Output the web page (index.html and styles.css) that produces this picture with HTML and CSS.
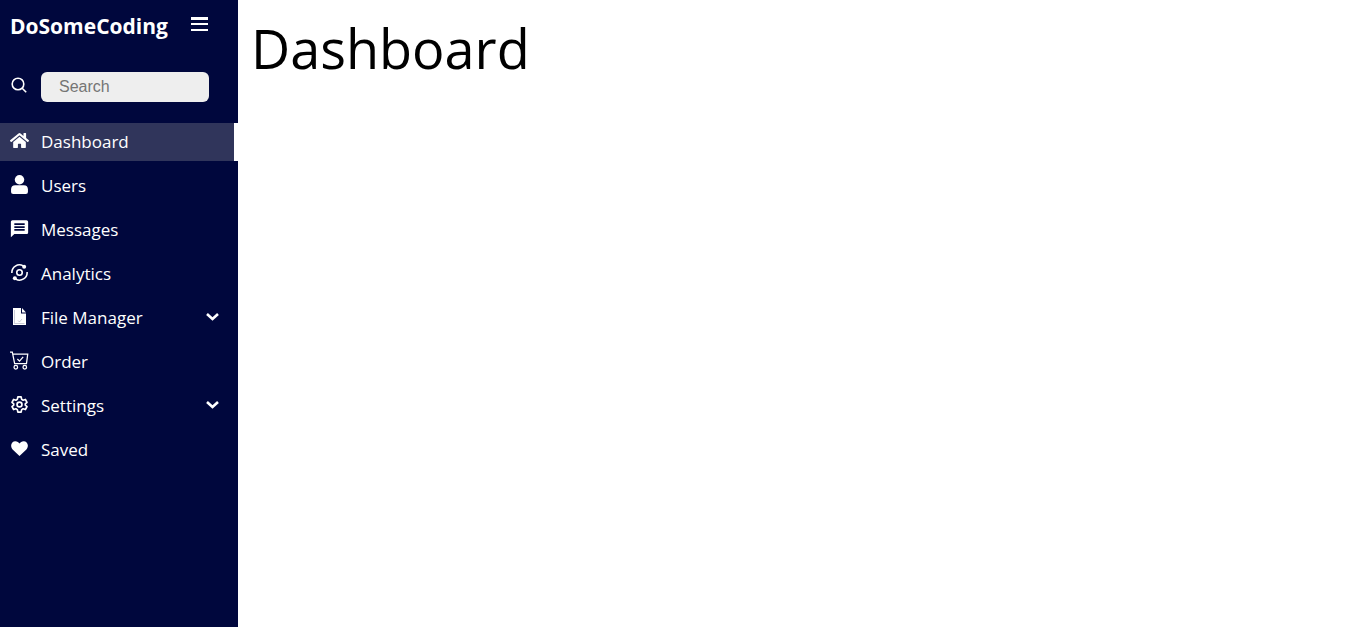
FILE: index.html
```html
<!DOCTYPE html>
<html lang="en">
<head>
<meta charset="utf-8">
<meta name="viewport" content="width=device-width, initial-scale=1">
<title>Dashboard</title>
<link rel="stylesheet" href="styles.css">
</head>
<body>
<div class="layout">
  <aside class="sidebar">
    <div class="top">
      <h2 class="brand">DoSomeCoding</h2>
      <button class="toggle" type="button" aria-label="Toggle menu">
        <svg class="icon" viewBox="0 0 19 19"><path fill="currentColor" d="M1 2h17v3H1zM1 8h17v2H1zM1 14h17v2H1z"/></svg>
      </button>
    </div>
    <div class="search">
      <label class="search-label" for="search" aria-label="Search">
        <svg class="icon" viewBox="0 0 19 19" fill="none" stroke="currentColor" stroke-width="1.6"><circle cx="8" cy="8" r="5.8"/><path d="M12.2 12.2l4 4"/></svg>
      </label>
      <input class="search-input" id="search" type="text" placeholder="Search">
    </div>
    <nav class="menu">
      <a class="link active" href="#">
        <svg class="icon" viewBox="0 0 576 512"><path fill="currentColor" d="M280.4 148.3L96 300.1V464a16 16 0 0 0 16 16l112-.3a16 16 0 0 0 16-16V368a16 16 0 0 1 16-16h64a16 16 0 0 1 16 16v95.600a16 16 0 0 0 16 16L464 480a16 16 0 0 0 16-16V300L295.700 148.300a12.200 12.200 0 0 0-15.300 0zM571.600 251.500L488 182.600V44a12 12 0 0 0-12-12h-56a12 12 0 0 0-12 12v72.600L318.500 43a48 48 0 0 0-61 0L4.300 251.500a12 12 0 0 0-1.600 16.900l25.500 31a12 12 0 0 0 16.900 1.600l235.200-193.700a12.200 12.200 0 0 1 15.300 0L530.900 301a12 12 0 0 0 16.900-1.600l25.500-31a12 12 0 0 0-1.700-16.900z"/></svg>
        <span class="text">Dashboard</span>
      </a>
      <a class="link" href="#">
        <svg class="icon" viewBox="0 0 18 18"><g fill="currentColor"><circle cx="9" cy="4.500" r="4.500"/><path d="M5 9.800h8q4 0 4 4V16q0 2-2 2H3q-2 0-2-2v-2.200q0-4 4-4z"/></g></svg>
        <span class="text">Users</span>
      </a>
      <a class="link" href="#">
        <svg class="icon" viewBox="1 1 22 22"><path fill="currentColor" fill-rule="evenodd" d="M20 2.500H4c-1.100 0-2 .9-2 2V22l4-3.500h14c1.100 0 2-.9 2-2v-12c0-1.100-.9-2-2-2zM6 6h12v2H6zm0 3.300h12v2H6zm0 3.300h12v2H6z"/></svg>
        <span class="text">Messages</span>
      </a>
      <a class="link" href="#">
        <svg class="icon" viewBox="0 0 18 18" fill="none" stroke="currentColor" stroke-width="1.500"><circle cx="9" cy="9" r="2.600"/><path d="M1.800 9.500A7.200 7.200 0 0 1 12.500 2.700M16.200 8.500A7.200 7.200 0 0 1 5.500 15.300"/><g fill="currentColor" stroke="none"><circle cx="13.400" cy="3.500" r="1.900"/><circle cx="4.600" cy="14.500" r="1.900"/></g></svg>
        <span class="text">Analytics</span>
      </a>
      <a class="link" href="#">
        <svg class="icon" viewBox="0 0 19 19"><path fill="currentColor" d="M3 1h8v5.500h5V18H3z"/><path fill="currentColor" d="M12 1l4 4.500h-4z"/><path fill="none" stroke="#00073d" stroke-opacity=".25" stroke-width=".8" d="M4.500 16.500h10M4.500 3v13.500M8 13.500l1.500 1.500 2.500-3"/></svg>
        <span class="text">File Manager</span>
        <svg class="icon chevron" viewBox="0 0 19 19" fill="none" stroke="currentColor" stroke-width="2.600"><path d="M4 7l5.500 5L15 7"/></svg>
      </a>
      <a class="link" href="#">
        <svg class="icon" viewBox="0 0 18 18" fill="none" stroke="currentColor" stroke-width="1.200"><path d="M0 1h2.200L4.400 12h11.200L16.800 3H3M7 7.600l2 2 3.500-4"/><circle cx="5.500" cy="15.400" r="1.700"/><circle cx="14" cy="15.400" r="1.700"/></svg>
        <span class="text">Order</span>
      </a>
      <a class="link" href="#">
        <svg class="icon" viewBox="-1 -1 20 20" fill="none" stroke="currentColor" stroke-width="1.800" stroke-linejoin="round"><path d="M7.300 1h3.400l.6 2.600 1.500.9 2.400-.8 1.700 3L15.100 8.300v1.400l1.800 1.600-1.700 3-2.400-.8-1.500.9-.6 2.600H7.300l-.6-2.600-1.500-.9-2.400.8-1.700-3 1.800-1.600V8.300L1.100 6.700l1.700-3 2.400.8 1.500-.9z"/><circle cx="9" cy="9" r="2.600"/></svg>
        <span class="text">Settings</span>
        <svg class="icon chevron" viewBox="0 0 19 19" fill="none" stroke="currentColor" stroke-width="2.600"><path d="M4 7l5.500 5L15 7"/></svg>
      </a>
      <a class="link" href="#">
        <svg class="icon" viewBox="0 0 19 19"><path fill="currentColor" d="M9.500 17L2.600 10.500C-.5 6.500 1.800 2.200 5.300 2.200c2 0 3.400 1 4.200 2.300.8-1.300 2.200-2.300 4.200-2.300 3.500 0 5.800 4.300 2.700 8.300z"/></svg>
        <span class="text">Saved</span>
      </a>
    </nav>
  </aside>
  <main class="content">
    <h1 class="title">Dashboard</h1>
  </main>
</div>
</body>
</html>
```
FILE: styles.css
```css
* {
  box-sizing: border-box;
  margin: 0;
  padding: 0;
}

body {
  background: #fff;
  color: #000;
  font-family: "Segoe UI", "Open Sans", sans-serif;
}

.layout {
  display: flex;
  min-height: 100vh;
}

.sidebar {
  flex: none;
  width: 238px;
  background: #00073d;
  color: #fff;
}

.top {
  display: flex;
  gap: 20px;
  padding: 11px 10px 13px;
}

.brand {
  width: 160px;
  font-size: 21px;
  line-height: 30px;
  white-space: nowrap;
}

.icon {
  display: block;
  flex: none;
  width: 19px;
  height: 19px;
}

.toggle {
  align-self: flex-start;
  padding-top: 4px;
  border: 0;
  background: none;
  color: inherit;
}

.search {
  display: flex;
  gap: 12px;
  padding: 18px 10px;
}

.search-label {
  padding-top: 4px;
}

.search-input {
  width: 168px;
  height: 30px;
  padding: 0 18px;
  border: 0;
  border-radius: 6px;
  background: #eee;
  font: 16px "Liberation Sans", Arial, sans-serif;
}

.search-input::placeholder {
  color: #757575;
}

.menu {
  display: flex;
  flex-direction: column;
  gap: 6px;
  padding-top: 3px;
}

.link {
  display: flex;
  align-items: center;
  gap: 12px;
  height: 38px;
  padding: 0 12px 3px 10px;
  border-right: 4px solid transparent;
  color: inherit;
  font-size: 17px;
  line-height: 24px;
  text-decoration: none;
}

.text {
  padding-top: 2px;
}

.active {
  border-color: #fff;
  background: #30355b;
}

.chevron {
  margin-left: auto;
}

.content {
  flex: 1;
  padding: 10px 13px;
}

.title {
  font-size: 54px;
  font-weight: 400;
  line-height: 76px;
}
```
